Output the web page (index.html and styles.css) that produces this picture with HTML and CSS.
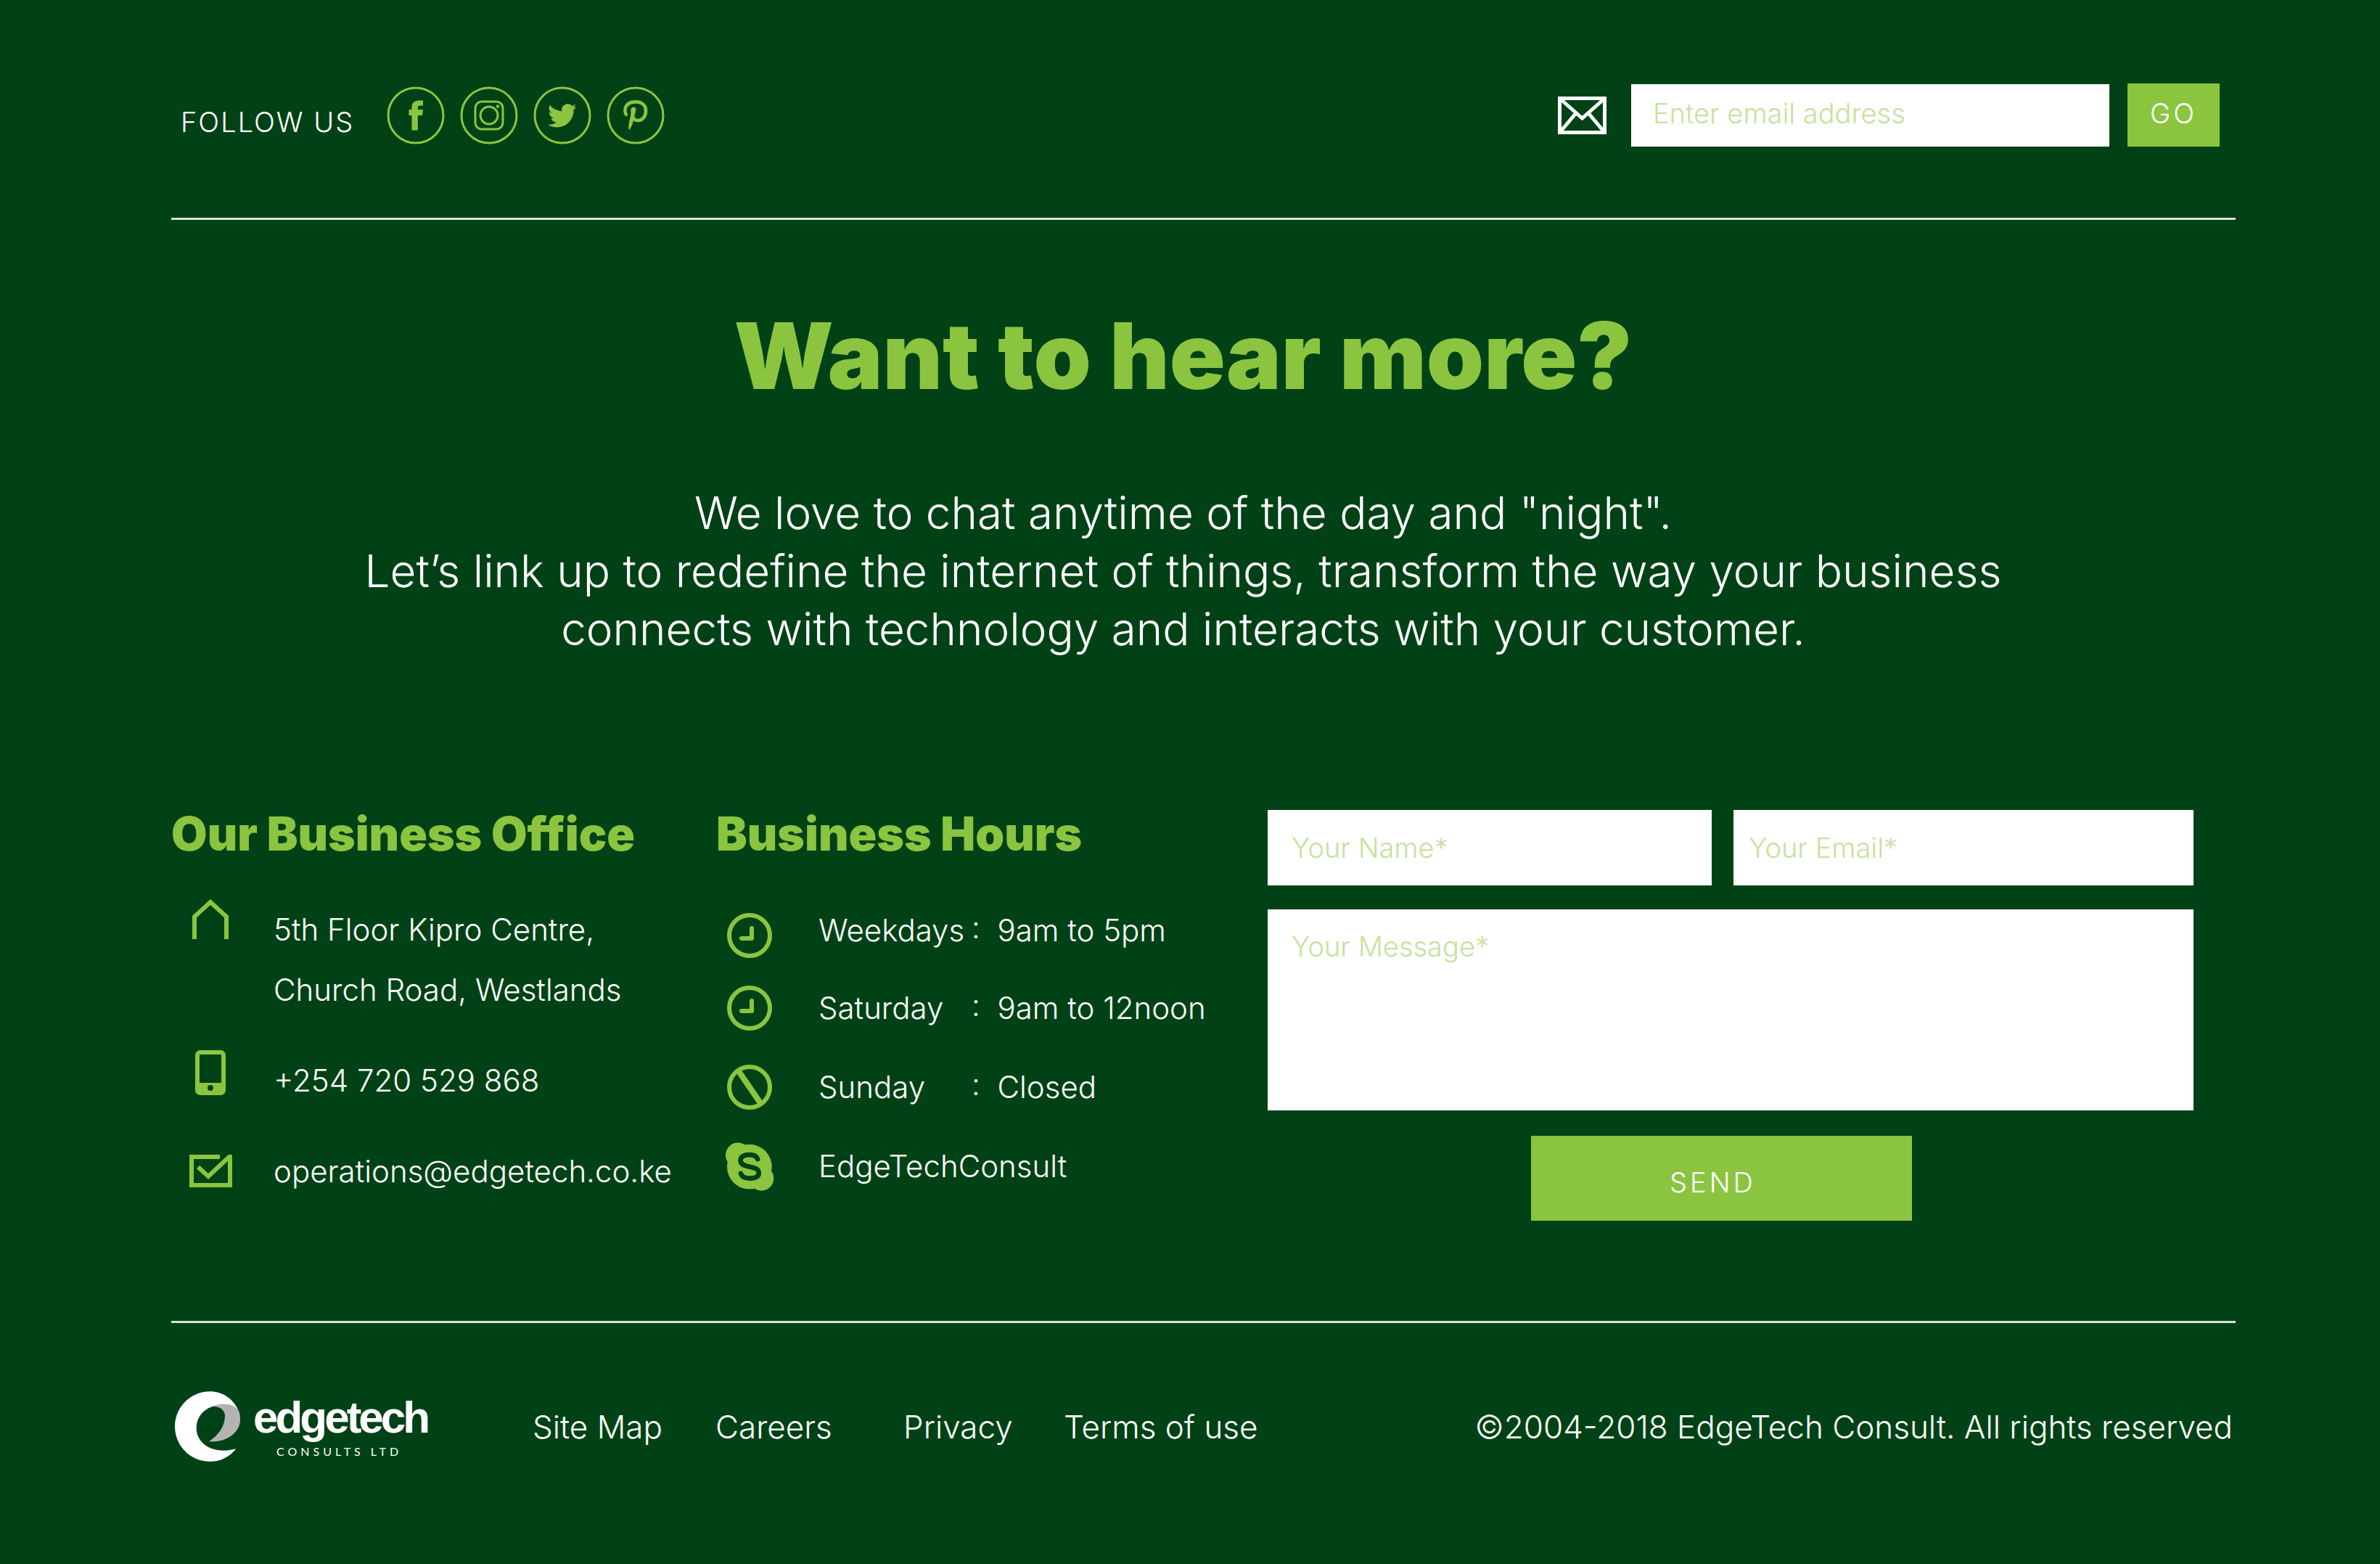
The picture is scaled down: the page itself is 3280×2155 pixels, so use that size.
FILE: index.html
```html
<!DOCTYPE html>
<html lang="en">
<head>
<meta charset="utf-8">
<title>EdgeTech Consult</title>
<link rel="stylesheet" href="styles.css">
</head>
<body>
<div class="page">
  <header class="topbar">
    <div class="follow">
      <span class="follow-label">FOLLOW US</span>
      <nav class="social" aria-label="Social media">
        <a href="#" aria-label="Facebook"><svg viewBox="0 0 80 80" width="80" height="80"><circle class="ring" cx="40" cy="40" r="38"/><path class="solid" d="M50 19.500h-5.500c-7 0-10 4-10 9.500v3H30.500v8h4V60.500h8.300V40h6.200l1-8h-7.200v-2.500c0-2 1-3 3-3H50z"/></svg></a>
        <a href="#" aria-label="Instagram"><svg viewBox="0 0 80 80" width="80" height="80"><circle class="ring" cx="40" cy="40" r="38"/><rect class="thin" x="21" y="21" width="38" height="38" rx="9"/><circle class="thin" cx="40" cy="40" r="12"/><circle class="solid" cx="52" cy="27.500" r="2.200"/></svg></a>
        <a href="#" aria-label="Twitter"><svg viewBox="0 0 80 80" width="80" height="80"><circle class="ring" cx="40" cy="40" r="38"/><path class="solid" transform="translate(20 20.500) scale(1.650)" d="M23.954 4.569a10 10 0 0 1-2.825.775 4.958 4.958 0 0 0 2.163-2.723 9.900 9.900 0 0 1-3.127 1.184 4.920 4.920 0 0 0-8.384 4.482C7.691 8.094 4.066 6.130 1.640 3.161a4.822 4.822 0 0 0-.666 2.475c0 1.710.870 3.213 2.188 4.096a4.904 4.904 0 0 1-2.228-.616v.061a4.923 4.923 0 0 0 3.946 4.827 4.996 4.996 0 0 1-2.212.085 4.937 4.937 0 0 0 4.604 3.417 9.868 9.868 0 0 1-6.102 2.105c-.390 0-.779-.023-1.170-.067a13.995 13.995 0 0 0 7.557 2.209c9.054 0 13.999-7.496 13.999-13.986 0-.209 0-.420-.015-.630a9.936 9.936 0 0 0 2.460-2.548z"/></svg></a>
        <a href="#" aria-label="Pinterest"><svg viewBox="0 0 240 240" width="80" height="80"><circle class="ring ring--x3" cx="120" cy="120" r="114"/><path class="pin-loop" d="M84 121c-13-14-14-57 36-57 30 0 42 18 42 37 0 24-15 40-32 40-11 0-18-6-20-13"/><path class="solid" d="M100 98c1-16 23-16 21-1-1 10-8 34-12 51-3 13-9 25-16 33-4-10-2-26 3-46 3-13 5-17 4-37z"/></svg></a>
      </nav>
    </div>
    <form class="subscribe">
      <svg class="envelope" viewBox="0 0 67 52" width="67" height="52"><path d="M2.500 2.500h62v47h-62zM3 3l30.500 27L64 3M3 49l21-25M64 49L43 24"/></svg>
      <input class="field field--bar" type="email" placeholder="Enter email address" aria-label="Enter email address">
      <button class="btn btn--go" type="submit">GO</button>
    </form>
  </header>

  <section class="intro">
    <h1>Want to hear more?</h1>
    <p>We love to chat anytime of the day and "night".<br>Let’s link up to redefine the internet of things, transform the way your business<br>connects with technology and interacts with your customer.</p>
  </section>

  <main class="contact">
    <section>
      <h2>Our Business Office</h2>
      <ul class="list list--office">
        <li class="entry entry--top"><span class="icon"><svg viewBox="0 0 50 55" width="50" height="55"><path class="line6" d="M3 55V24L25 4l22 20v31"/></svg></span><address>5th Floor Kipro Centre,<br>Church Road, Westlands</address></li>
        <li class="entry entry--top"><span class="icon"><svg viewBox="0 0 42 62" width="42" height="62"><path class="solid" fill-rule="evenodd" d="M7 0h28a7 7 0 0 1 7 7v48a7 7 0 0 1-7 7H7a7 7 0 0 1-7-7V7a7 7 0 0 1 7-7zM6 6v39h30V6zM21 48a4 4 0 1 0 0 8 4 4 0 0 0 0-8z"/></svg></span><a href="tel:+254720529868">+254 720 529 868</a></li>
        <li class="entry"><span class="icon"><svg viewBox="0 0 59 45" width="59" height="45"><path class="line6" d="M42 3H3v39h53V4M12 17l14 13L58 0"/></svg></span><a href="mailto:operations@edgetech.co.ke">operations@edgetech.co.ke</a></li>
      </ul>
    </section>

    <section>
      <h2>Business Hours</h2>
      <ul class="list list--hours">
        <li class="entry entry--top"><span class="icon"><svg viewBox="0 0 62 62" width="62" height="62"><circle class="line6" cx="31" cy="31" r="28"/><path class="hand" d="M34 21v14H20"/></svg></span><span class="day">Weekdays</span><span>:&nbsp; 9am to 5pm</span></li>
        <li class="entry"><span class="icon"><svg viewBox="0 0 62 62" width="62" height="62"><circle class="line6" cx="31" cy="31" r="28"/><path class="hand" d="M34 21v14H20"/></svg></span><span class="day">Saturday</span><span>:&nbsp; 9am to 12noon</span></li>
        <li class="entry"><span class="icon"><svg viewBox="0 0 62 62" width="62" height="62"><circle class="line6" cx="31" cy="31" r="28"/><path class="bar" d="M16 9l30 44"/></svg></span><span class="day">Sunday</span><span>:&nbsp; Closed</span></li>
        <li class="entry"><span class="icon"><svg viewBox="30 40 202 201" width="67" height="67"><circle class="solid" cx="129" cy="141" r="93"/><circle class="solid" cx="81" cy="92" r="51"/><circle class="solid" cx="179" cy="189" r="51"/><path class="skype-s" d="M163 109c-5-15-20-18-34-18-21 0-37 7-37 24 0 19 22 22 38 26 20 5 38 8 38 26s-18 22-38 22c-22 0-33-8-37-20"/></svg></span><a href="skype:EdgeTechConsult">EdgeTechConsult</a></li>
      </ul>
    </section>

    <form class="message">
      <div class="message-row">
        <input class="field field--name" type="text" placeholder="Your Name*" aria-label="Your Name">
        <input class="field field--email" type="email" placeholder="Your Email*" aria-label="Your Email">
      </div>
      <textarea class="field field--message" placeholder="Your Message*" aria-label="Your Message"></textarea>
      <button class="btn btn--send" type="submit">SEND</button>
    </form>
  </main>

  <footer class="footer">
    <a class="logo" href="#">
      <svg viewBox="27 29 270 290" width="90" height="97" aria-hidden="true"><path class="mark-light" d="M280 266C255 298 217 319 172 319 92 319 27 254 27 174S92 29 172 29c53 0 98 31 118 79-25-24-70-32-110-16-40 14-64 48-64 88 0 66 70 112 164 86z"/><path class="mark-shade" d="M180 92c45-20 92-10 110 15 6 13 7 26 7 39 0 52-57 96-129 90 42-26 66-66 66-106 0-22-19-40-54-38z"/></svg>
      <span class="wordmark"><span class="wordmark-name">edgetech</span><span class="wordmark-sub">CONSULTS LTD</span></span>
    </a>
    <nav class="links" aria-label="Footer">
      <a href="#">Site Map</a>
      <a href="#">Careers</a>
      <a href="#">Privacy</a>
      <a href="#">Terms of use</a>
    </nav>
    <p class="copyright">©2004-2018 EdgeTech Consult. All rights reserved</p>
  </footer>
</div>
</body>
</html>
```
FILE: styles.css
```css
:root {
  --bg: #004216;
  --green: #8bc540;
  --placeholder: #c5e29f;
}

* { box-sizing: border-box; }

body {
  margin: 0;
  background: var(--bg);
  color: #fff;
  font-family: Inter, "Open Sans", sans-serif;
  font-weight: 300;
  font-size: 42px;
}

a { color: inherit; text-decoration: none; }
svg { display: block; flex: none; }
p, h1, h2, ul { margin: 0; padding: 0; }
ul { list-style: none; }
address { font-style: normal; }

.page { padding: 115px 199px 120px 236px; }

/* icon strokes */
.solid { fill: var(--green); }
.ring, .thin, .line6, .hand, .bar, .pin-loop { fill: none; stroke: var(--green); }
.ring { stroke-width: 3; }
.ring--x3 { stroke-width: 9; }
.thin { stroke-width: 3; }
.line6 { stroke-width: 6; }
.hand { stroke-width: 6; stroke-linecap: round; stroke-linejoin: round; }
.bar { stroke-width: 8; }
.pin-loop { stroke-width: 14; }
.skype-s { fill: none; stroke: var(--bg); stroke-width: 20; stroke-linecap: round; }

/* top bar */
.topbar {
  display: flex;
  justify-content: space-between;
  align-items: center;
  padding: 0 22px 98px 13px;
  border-bottom: 3px solid #d9e3dc;
}
.follow { display: flex; align-items: flex-end; gap: 45px; }
.follow-label { font-size: 38px; line-height: 58px; letter-spacing: 2px; padding-bottom: 2px; }
.social { display: flex; gap: 21px; }

.subscribe { display: flex; align-items: center; }
.envelope { margin-right: 34px; }
.envelope path { fill: none; stroke: #fff; stroke-width: 5; }

.field {
  display: block;
  border: 0;
  border-radius: 0;
  margin: 0;
  background: #fff;
  color: var(--bg);
  font: inherit;
  font-size: 38px;
  resize: none;
}
.field::placeholder { color: var(--placeholder); opacity: 1; }
.field--bar { width: 659px; height: 86px; padding: 0 30px 5px; }

.btn {
  border: 0;
  padding: 0;
  background: var(--green);
  color: #fff;
  font: inherit;
  font-size: 38px;
  letter-spacing: 4px;
}
.btn--go { width: 127px; height: 87px; margin-left: 25px; padding-bottom: 5px; }

/* intro */
.intro { padding: 127px 56px 0 0; text-align: center; }
.intro h1 { color: var(--green); font-size: 127px; font-weight: 900; line-height: 120px; }
.intro p { margin-top: 117px; font-size: 62px; line-height: 80px; }

/* contact */
.contact {
  display: grid;
  grid-template-columns: 751fr 760fr 1276fr;
  margin-top: 209px;
  padding-right: 58px;
}
h2 { color: var(--green); font-size: 64px; font-weight: 900; line-height: 66px; }

.entry { display: flex; align-items: center; white-space: nowrap; }
.entry--top { align-items: flex-start; }
.icon { display: flex; justify-content: center; flex: none; }

.list--office { display: grid; gap: 42px; margin-top: 57px; line-height: 83px; }
.list--office .icon { width: 108px; margin-right: 33px; }

.list--hours { display: grid; gap: 29px; margin-top: 76px; line-height: 48px; }
.list--hours .icon { width: 92px; margin-right: 49px; }
.list--hours .entry { min-height: 80px; }
.list--hours .entry--top { min-height: 62px; }
.day { width: 211px; }

.message { display: grid; gap: 33px; align-content: start; }
.message-row { display: grid; grid-template-columns: 612fr 634fr; gap: 30px; }
.field--name, .field--email { width: 100%; height: 104px; padding: 0 33px; }
.field--email { padding: 0 21px; }
.field--message { width: 100%; height: 277px; padding: 27px 33px; line-height: 48px; }
.btn--send { width: 525px; height: 117px; margin: 2px 0 0 363px; padding: 10px 24px 0 0; }

/* footer */
.footer {
  display: grid;
  grid-template-columns: 493px auto 1fr;
  align-items: center;
  margin-top: 138px;
  padding: 94px 4px 0 5px;
  border-top: 3px solid #d9e3dc;
  font-size: 44px;
}
.logo { display: flex; align-items: center; gap: 18px; }
.mark-light { fill: #fff; }
.mark-shade { fill: #b3b3b3; }
.wordmark { display: flex; flex-direction: column; gap: 6px; }
.wordmark-name {
  font: 700 62px/62px "Liberation Sans", Arial, sans-serif;
  letter-spacing: -4px;
}
.wordmark-sub {
  padding-left: 32px;
  font: 400 16px/20px Lato, sans-serif;
  letter-spacing: 5px;
}
.links { display: grid; grid-template-columns: 252px 259px 221px auto; }
.copyright { text-align: right; white-space: nowrap; }
```
